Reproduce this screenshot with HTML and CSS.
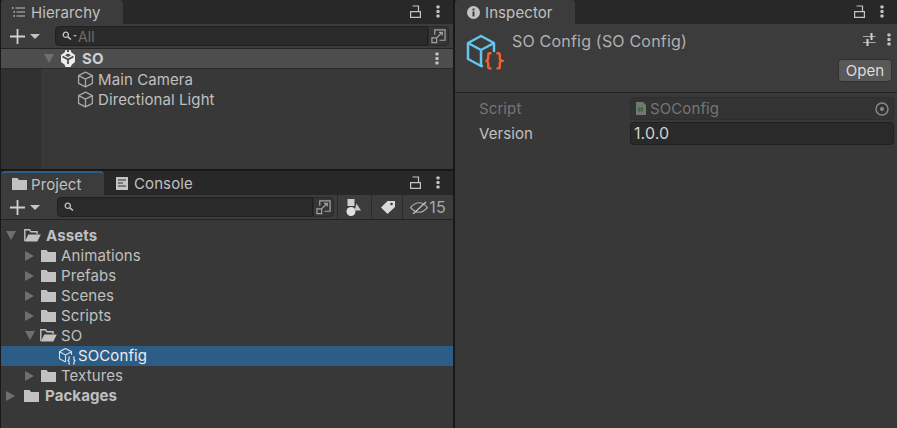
FILE: index.html
```html
<!DOCTYPE html>
<html lang="en">

<head>
  <meta charset="UTF-8">
  <meta name="viewport" content="width=device-width, initial-scale=1.0">
  <title>Unity Editor</title>
  <link rel="stylesheet" href="styles.css">
</head>

<body>
  <svg class="defs" width="0" height="0">
    <symbol id="lock" viewBox="0 0 11 13">
      <path d="M.6 6.600h9.800v5.800H.6zM2.500 1H8.500V6.600" fill="none" stroke="#c4c4c4" stroke-width="1.200" />
    </symbol>
    <symbol id="dots" viewBox="0 0 4 13">
      <rect x=".4" y=".4" width="3.200" height="3" rx=".8" fill="#c4c4c4" />
      <rect x=".4" y="5" width="3.200" height="3" rx=".8" fill="#c4c4c4" />
      <rect x=".4" y="9.600" width="3.200" height="3" rx=".8" fill="#c4c4c4" />
    </symbol>
    <symbol id="folder" viewBox="0 0 15 12">
      <path d="M0 0h5.500l1.500 2h8v10H0z" fill="#c2c2c2" />
    </symbol>
    <symbol id="folder-open" viewBox="0 0 17 13">
      <path d="M.8 12V.8h4.700l1.500 2h6v2.200" fill="none" stroke="#c2c2c2" stroke-width="1.400" />
      <path d="M.8 12.500h12.500l3.500-7H4.300z" fill="#c2c2c2" />
    </symbol>
    <symbol id="cube" viewBox="0 0 16 16">
      <path d="M8 1l6.500 3.300v7.400L8 15l-6.500-3.300V4.300zM1.500 4.300L8 7.700l6.500-3.400M8 7.700V15" fill="none" stroke="#a8a8a8" stroke-width="1.200" stroke-linejoin="round" />
    </symbol>
    <symbol id="expand" viewBox="0 0 16 16">
      <path d="M4 6V1h11v11H9" fill="none" stroke="#a4a4a4" stroke-width="1.300" />
      <path d="M1 9.500h5v5H1z" fill="none" stroke="#a4a4a4" stroke-width="1.300" />
      <path d="M6 9.500l6-6M8.500 3.500h3.500V7" fill="none" stroke="#a4a4a4" stroke-width="1.300" />
    </symbol>
    <symbol id="plus" viewBox="0 0 15 15">
      <path d="M7.500 0v15M0 7.500h15" stroke="#d0d0d0" stroke-width="1.800" />
    </symbol>
    <symbol id="search" viewBox="0 0 10 10">
      <circle cx="3.800" cy="3.800" r="2.600" fill="none" stroke="#c4c4c4" stroke-width="1.300" />
      <path d="M5.800 5.800L9 8.500" stroke="#c4c4c4" stroke-width="1.600" />
    </symbol>
    <symbol id="script-cube" viewBox="0 0 38 38">
      <path d="M15 2l13 7v8M15 2L2 9v16l13 7h1M2 9l13 7 13-7M15 16v16" fill="none" stroke="#63c6ee" stroke-width="2.500" stroke-linejoin="round" stroke-linecap="round" />
      <path d="M25.500 19.200h-1.800q-1.500 0-1.500 2v3q0 2-2.500 2.600q2.500 .6 2.500 2.600v3q0 2 1.500 2h1.800M30.500 19.200h1.800q1.500 0 1.500 2v3q0 2 2.200 2.600q-2.200 .6-2.200 2.600v3q0 2-1.500 2h-1.800" fill="none" stroke="#f2602f" stroke-width="2.400" />
    </symbol>
  </svg>

  <div class="editor">
    <div class="left-col">
      <section class="panel hierarchy">
        <div class="tabbar">
          <div class="tab">
            <svg class="tab-icon" width="13" height="10" viewBox="0 0 13 10">
              <path d="M3.500 1H13M4.500 5H13M4.500 9H13" stroke="#bdbdbd" stroke-width="1.100" />
              <path d="M0 .3h1.500v1.500H0zM1.500 4.300H3v1.500H1.500zM1.500 8.300H3v1.500H1.500z" fill="#bdbdbd" />
            </svg>
            <span>Hierarchy</span>
          </div>
          <div class="tab-actions">
            <svg class="lock"><use href="#lock" /></svg>
            <svg class="dots"><use href="#dots" /></svg>
          </div>
        </div>
        <div class="toolbar">
          <svg class="plus"><use href="#plus" /></svg>
          <span class="caret"></span>
          <div class="searchbox searchbox-all">
            <svg class="search"><use href="#search" /></svg>
            <span class="search-caret"></span>
            <span class="search-hint">All</span>
          </div>
          <div class="expand-btn"><svg class="expand"><use href="#expand" /></svg></div>
        </div>
        <div class="scene-body">
          <div class="scene-row">
            <span class="arrow-down scene-arrow"></span>
            <svg class="unity-logo" width="16" height="17" viewBox="0 0 16 17">
              <path d="M5.500 0h1.500v2h2V0h1.500l1 2.500L15 5v7l-3 2.500-1.500 2.500H5.500l-1-2.500L1 12V5l3.500-2.500z" fill="#ececec" />
              <path d="M2.500 6.500L8 9.500l5.500-3M8 9.500V14" fill="none" stroke="#4d4d4d" stroke-width="1.800" />
              <path d="M8 3.500l3 1.700-3 1.700-3-1.700z" fill="#4d4d4d" />
            </svg>
            <span class="scene-name">SO</span>
            <svg class="dots row-dots"><use href="#dots" /></svg>
          </div>
          <div class="go-row">
            <svg class="cube"><use href="#cube" /></svg>
            <span>Main Camera</span>
          </div>
          <div class="go-row">
            <svg class="cube"><use href="#cube" /></svg>
            <span>Directional Light</span>
          </div>
        </div>
      </section>

      <section class="panel project">
        <div class="tabbar">
          <div class="tab tab-focus">
            <svg class="tab-icon" width="15" height="12"><use href="#folder" /></svg>
            <span>Project</span>
          </div>
          <div class="tab tab-off">
            <svg class="tab-icon" width="12" height="13" viewBox="0 0 12 13">
              <path d="M0 0h12v13H0z" fill="#c4c4c4" />
              <path d="M2 3h8M2 6h5M2 9h8" stroke="#282828" stroke-width="1.200" />
            </svg>
            <span>Console</span>
          </div>
          <div class="tab-actions">
            <svg class="lock"><use href="#lock" /></svg>
            <svg class="dots"><use href="#dots" /></svg>
          </div>
        </div>
        <div class="toolbar project-toolbar">
          <svg class="plus"><use href="#plus" /></svg>
          <span class="caret"></span>
          <div class="searchbox searchbox-project">
            <svg class="search"><use href="#search" /></svg>
          </div>
          <div class="expand-btn"><svg class="expand"><use href="#expand" /></svg></div>
          <div class="tool-btn tool-type">
            <svg width="15" height="17" viewBox="0 0 15 17">
              <path d="M1.500 0h7v7h-7z" fill="#d0d0d0" />
              <circle cx="5" cy="12.500" r="4.500" fill="#e0e0e0" />
              <path d="M10.500 4.500l4.500 7H8.500z" fill="#c8c8c8" />
            </svg>
          </div>
          <div class="tool-btn tool-label">
            <svg width="15" height="14" viewBox="0 0 15 14">
              <path d="M7.500 1H15v6l-7.500 7L1 7.500z" fill="#d8d8d8" />
              <circle cx="11.500" cy="4" r="1.300" fill="#3c3c3c" />
            </svg>
          </div>
          <div class="tool-btn hidden-count">
            <svg width="18" height="13" viewBox="0 0 18 13">
              <path d="M.5 6.500Q9-3 17.500 6.500Q9 16 .5 6.500z" fill="none" stroke="#a8a8a8" stroke-width="1.200" />
              <path d="M3 13L16 1" stroke="#c4c4c4" stroke-width="1.300" />
            </svg>
            <span>15</span>
          </div>
        </div>
        <div class="tree">
          <div class="tree-row root">
            <span class="arrow-down"></span>
            <svg class="ic-open"><use href="#folder-open" /></svg>
            <span>Assets</span>
          </div>
          <div class="tree-row child">
            <span class="arrow-right"></span>
            <svg class="ic-folder"><use href="#folder" /></svg>
            <span>Animations</span>
          </div>
          <div class="tree-row child">
            <span class="arrow-right"></span>
            <svg class="ic-folder"><use href="#folder" /></svg>
            <span>Prefabs</span>
          </div>
          <div class="tree-row child">
            <span class="arrow-right"></span>
            <svg class="ic-folder"><use href="#folder" /></svg>
            <span>Scenes</span>
          </div>
          <div class="tree-row child">
            <span class="arrow-right"></span>
            <svg class="ic-folder"><use href="#folder" /></svg>
            <span>Scripts</span>
          </div>
          <div class="tree-row child">
            <span class="arrow-down"></span>
            <svg class="ic-open"><use href="#folder-open" /></svg>
            <span>SO</span>
          </div>
          <div class="tree-row selected">
            <svg class="ic-config" width="18" height="18" viewBox="0 0 18 18">
              <path d="M7.500 1.500l6 3.200v3M7.500 1.500l-6 3.200v7l6 3.300M1.500 4.700l6 3.200 6-3.200M7.500 7.900V15" fill="none" stroke="#d6dfe8" stroke-width="1.100" />
              <path d="M12 10h-1v2.500l-1 1 1 1V17h1M15 10h1v2.500l1 1-1 1V17h-1" fill="none" stroke="#e6e6e6" stroke-width="1.100" />
            </svg>
            <span>SOConfig</span>
          </div>
          <div class="tree-row child">
            <span class="arrow-right"></span>
            <svg class="ic-folder"><use href="#folder" /></svg>
            <span>Textures</span>
          </div>
          <div class="tree-row root">
            <span class="arrow-right"></span>
            <svg class="ic-folder ic-root"><use href="#folder" /></svg>
            <span>Packages</span>
          </div>
        </div>
      </section>
    </div>

    <section class="panel inspector">
      <div class="tabbar">
        <div class="tab tab-inspector">
          <svg class="tab-icon" width="13" height="13" viewBox="0 0 13 13">
            <circle cx="6.500" cy="6.500" r="6.500" fill="#c4c4c4" />
            <path d="M5.500 2.500h2v2h-2zM5.500 5.500h2v5h-2z" fill="#3c3c3c" />
          </svg>
          <span>Inspector</span>
        </div>
        <div class="tab-actions">
          <svg class="lock"><use href="#lock" /></svg>
          <svg class="dots"><use href="#dots" /></svg>
        </div>
      </div>
      <div class="insp-header">
        <svg class="insp-icon"><use href="#script-cube" /></svg>
        <div class="insp-title">SO Config (SO Config)</div>
        <div class="insp-right">
          <div class="insp-actions">
            <svg width="13" height="13" viewBox="0 0 13 13">
              <path d="M0 3.500h12.500M0 9.500h12.500" stroke="#a8a8a8" stroke-width="1" />
              <path d="M7.500 0h2v7h-2zM3.500 6h2v7h-2z" fill="#cfcfcf" />
            </svg>
            <svg class="dots"><use href="#dots" /></svg>
          </div>
          <div class="open-btn">Open</div>
        </div>
      </div>
      <div class="insp-fields">
        <div class="field field-off">
          <span class="field-label">Script</span>
          <div class="field-object">
            <svg class="script-file" width="10" height="13" viewBox="0 0 10 13">
              <path d="M0 0h7l3 3v10H0z" fill="#717a71" />
              <path d="M3 5v5M6 5v5M2 6.500h5M2 8.500h5" stroke="#3f5f44" stroke-width="1" />
            </svg>
            <span>SOConfig</span>
            <svg class="target" width="14" height="14" viewBox="0 0 14 14">
              <circle cx="7" cy="7" r="6" fill="none" stroke="#8a8a8a" stroke-width="1.400" />
              <circle cx="7" cy="7" r="2" fill="#8a8a8a" />
            </svg>
          </div>
        </div>
        <div class="field">
          <span class="field-label">Version</span>
          <div class="field-input">1.0.0</div>
        </div>
      </div>
    </section>
  </div>
</body>

</html>
```

FILE: styles.css
```css
* {
  box-sizing: border-box;
}

html,
body {
  margin: 0;
  height: 100%;
  overflow: hidden;
}

body {
  font-family: Inter, "Noto Sans", sans-serif;
  font-size: 15px;
  letter-spacing: 0.1px;
  color: #c0c0c0;
  background-color: #191919;
}

.defs {
  position: absolute;
}

svg {
  display: block;
  flex: none;
}

.editor {
  display: flex;
  width: 897px;
  height: 428px;
  gap: 2px;
}

.left-col {
  display: flex;
  flex-direction: column;
  width: 453px;
  gap: 1px;
  padding-left: 1px;
}

.panel {
  display: flex;
  flex-direction: column;
  background-color: #383838;
}

.hierarchy {
  height: 169px;
}

.project {
  flex: 1;
  border-top: 1px solid #191919;
}

.inspector {
  flex: 1;
}

/* tab bar */
.tabbar {
  display: flex;
  height: 24px;
  flex: none;
  background-color: #282828;
}

.tab {
  display: flex;
  align-items: center;
  gap: 6px;
  width: 122px;
  padding-left: 11px;
  background-color: #3c3c3c;
  border-top-left-radius: 4px;
  border-top-right-radius: 4px;
}

.tab-focus {
  width: 103px;
  padding-left: 11px;
  gap: 4px;
  border-top: 2px solid #2c5d87;
}

.tab-off {
  width: 96px;
  padding-left: 12px;
  background-color: transparent;
  gap: 6px;
}

.tab-inspector {
  width: 120px;
  padding-left: 12px;
  gap: 5px;
}

.tab-actions {
  display: flex;
  align-items: center;
  gap: 15px;
  margin-left: auto;
  padding-right: 13px;
  padding-bottom: 2px;
}

.lock {
  width: 11px;
  height: 13px;
}

.dots {
  width: 4px;
  height: 13px;
}

/* toolbars */
.toolbar {
  display: flex;
  align-items: center;
  height: 25px;
  flex: none;
  padding-left: 9px;
  background-color: #3c3c3c;
  border-bottom: 1px solid #232323;
}

.plus {
  width: 15px;
  height: 15px;
}

.caret {
  width: 0;
  height: 0;
  margin-left: 5px;
  border-left: 5px solid transparent;
  border-right: 5px solid transparent;
  border-top: 5px solid #c4c4c4;
}

.searchbox {
  display: flex;
  align-items: center;
  height: 20px;
  margin-left: 15px;
  padding-left: 6px;
  background-color: #2a2a2a;
  border: 1px solid #202020;
  border-radius: 4px 0 0 4px;
}

.searchbox-all {
  width: 373px;
}

.searchbox-project {
  width: 256px;
  margin-left: 17px;
}

.search {
  width: 10px;
  height: 10px;
}

.search-caret {
  width: 0;
  height: 0;
  margin-left: 1px;
  border-left: 2px solid transparent;
  border-right: 2px solid transparent;
  border-top: 2px solid #a8a8a8;
}

.search-hint {
  margin-left: 1px;
  color: #6e6e6e;
  font-size: 14px;
}

.expand-btn {
  display: flex;
  align-items: center;
  justify-content: center;
  width: 21px;
  height: 20px;
  background-color: #353535;
  border: 1px solid #2a2a2a;
  border-radius: 0 4px 4px 0;
}

.expand {
  width: 15px;
  height: 15px;
}

.tool-btn {
  display: flex;
  align-items: center;
  justify-content: center;
  gap: 1px;
  height: 24px;
  border-left: 1px solid #2a2a2a;
}

.tool-type {
  width: 34px;
  margin-left: 3px;
  padding-right: 2px;
}

.tool-label {
  width: 31px;
}

.hidden-count {
  width: 51px;
  color: #a8a8a8;
  font-size: 16px;
}

/* hierarchy rows */
.scene-body {
  flex: 1;
  background: linear-gradient(to right, #303030 40px, #383838 40px);
}

.scene-row {
  display: flex;
  align-items: center;
  height: 20px;
  background-color: #4d4d4d;
  border-bottom: 1px solid #2a2a2a;
}

.scene-arrow {
  margin-left: 43px;
}

.unity-logo {
  margin-left: 6px;
}

.scene-name {
  margin-left: 6px;
  font-weight: 700;
  color: #cfcfcf;
}

.row-dots {
  margin-left: auto;
  margin-right: 14px;
}

.go-row {
  display: flex;
  align-items: center;
  height: 20px;
  padding-left: 76px;
  gap: 4px;
}

.cube {
  width: 17px;
  height: 17px;
}

.arrow-down {
  width: 0;
  height: 0;
  border-left: 5px solid transparent;
  border-right: 5px solid transparent;
  border-top: 9px solid #6f6f6f;
}

.arrow-right {
  width: 0;
  height: 0;
  margin: 0 1px 0 0;
  border-top: 5px solid transparent;
  border-bottom: 5px solid transparent;
  border-left: 9px solid #6f6f6f;
}

/* project tree */
.tree {
  flex: 1;
  padding-top: 6px;
}

.tree-row {
  display: flex;
  align-items: center;
  height: 20px;
  padding-bottom: 1px;
}

.root {
  padding-left: 5px;
  font-weight: 700;
}

.child {
  padding-left: 24px;
}

.ic-folder {
  width: 15px;
  height: 12px;
  margin-left: 6px;
  margin-right: 5px;
}

.ic-root {
  margin-left: 8px;
  margin-right: 6px;
}

.ic-open {
  width: 17px;
  height: 13px;
  margin-left: 5px;
  margin-right: 4px;
}

.root .ic-open {
  margin-left: 8px;
  margin-right: 5px;
}

.selected {
  padding-left: 57px;
  color: #ececec;
  background-color: #2c5d87;
}

.ic-config {
  margin-right: 2px;
}

/* inspector */
.insp-header {
  display: flex;
  height: 69px;
  flex: none;
  padding: 5px 5px 0 11px;
  background-color: #3c3c3c;
  border-bottom: 1px solid #232323;
}

.insp-icon {
  width: 38px;
  height: 38px;
  margin-top: 5px;
}

.insp-title {
  margin-left: 8px;
  margin-top: 2px;
  font-size: 16px;
  letter-spacing: 0.2px;
  color: #b0b0b0;
}

.insp-right {
  display: flex;
  flex-direction: column;
  align-items: flex-end;
  margin-left: auto;
}

.insp-actions {
  display: flex;
  align-items: center;
  gap: 11px;
  height: 21px;
  padding-right: 1px;
}

.open-btn {
  width: 54px;
  height: 23px;
  margin-top: 9px;
  text-align: center;
  line-height: 21px;
  color: #dcdcdc;
  background-color: #585858;
  border: 1px solid #303030;
  border-radius: 4px;
}

.insp-fields {
  padding: 4px 3px 0 24px;
}

.field {
  display: flex;
  align-items: center;
  height: 23px;
  margin-bottom: 2px;
}

.field-label {
  width: 151px;
}

.field-off .field-label {
  color: #757575;
}

.field-object {
  display: flex;
  flex: 1;
  align-items: center;
  height: 23px;
  padding-left: 5px;
  padding-right: 4px;
  color: #757575;
  background-color: #333333;
  border: 1px solid #2e2e2e;
  border-radius: 4px;
}

.script-file {
  margin-right: 4px;
}

.target {
  margin-left: auto;
}

.field-input {
  flex: 1;
  height: 23px;
  padding-left: 3px;
  font-size: 16px;
  line-height: 21px;
  color: #d0d0d0;
  background-color: #2a2a2a;
  border: 1px solid #202020;
  border-radius: 4px;
}
```
